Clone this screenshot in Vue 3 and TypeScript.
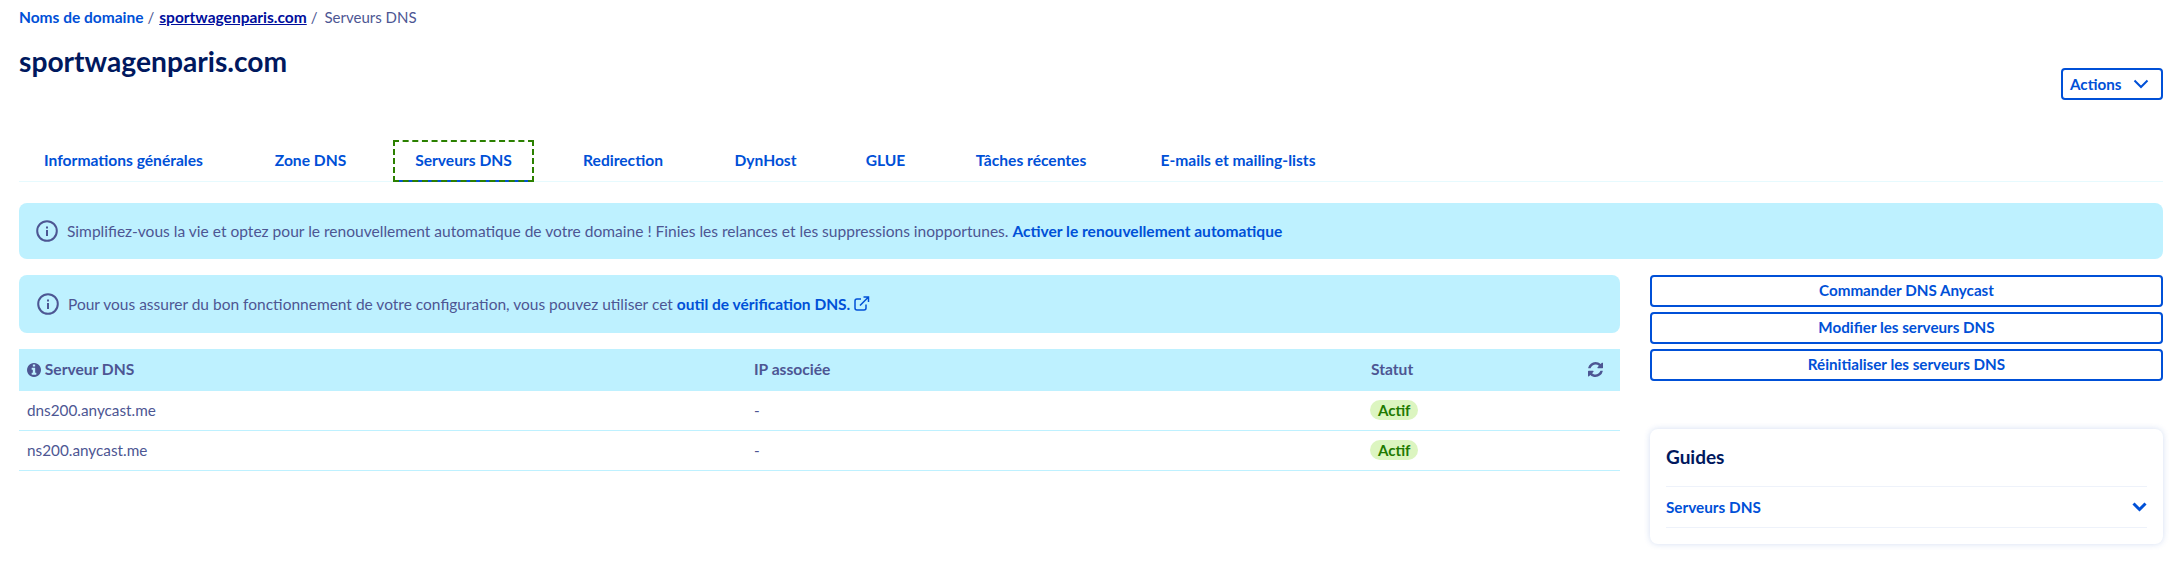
<script setup lang="ts">
const tabs: string[] = ['Informations générales', 'Zone DNS', 'Serveurs DNS', 'Redirection', 'DynHost', 'GLUE', 'Tâches récentes', 'E-mails et mailing-lists']
const rows = [{ name: 'dns200.anycast.me' }, { name: 'ns200.anycast.me' }]
const actions: string[] = ['Commander DNS Anycast', 'Modifier les serveurs DNS', 'Réinitialiser les serveurs DNS']
</script>

<template>
  <div class="page">
    <nav class="crumbs">
      <a class="crumb">Noms de domaine</a><span class="sep">/</span>
      <a class="crumb current">sportwagenparis.com</a><span class="sep">/</span>
      <span class="last">Serveurs DNS</span>
    </nav>
    <header class="head">
      <h1>sportwagenparis.com</h1>
      <button class="btn actions">Actions
        <svg width="16" height="10" viewBox="0 0 16 10" fill="none" stroke="#0050d7" stroke-width="2"><path d="M1.5 1.5 8 8l6.5-6.5" /></svg>
      </button>
    </header>
    <div class="tabs">
      <a v-for="t in tabs" :key="t" class="tab" :class="{ active: t === 'Serveurs DNS' }">{{ t }}</a>
    </div>
    <div class="alert wide">
      <svg class="info" width="22" height="22" viewBox="0 0 22 22"><circle cx="11" cy="11" r="9.8" fill="none" stroke="#4d5693" stroke-width="2" /><rect x="10" y="10" width="2" height="6" fill="#4d5693" /><rect x="10" y="6.5" width="2" height="2" fill="#4d5693" /></svg>
      <p>Simplifiez-vous la vie et optez pour le renouvellement automatique de votre domaine ! Finies les relances et les suppressions inopportunes. <a>Activer le renouvellement automatique</a></p>
    </div>
    <div class="columns">
      <main class="left">
        <div class="alert">
          <svg class="info" width="22" height="22" viewBox="0 0 22 22"><circle cx="11" cy="11" r="9.8" fill="none" stroke="#4d5693" stroke-width="2" /><rect x="10" y="10" width="2" height="6" fill="#4d5693" /><rect x="10" y="6.5" width="2" height="2" fill="#4d5693" /></svg>
          <p>Pour vous assurer du bon fonctionnement de votre configuration, vous pouvez utiliser cet <a>outil de vérification DNS.
            <svg width="16" height="15" viewBox="0 0 16 15" fill="none" stroke="#0050d7" stroke-width="1.5"><path d="M12 8.5V12a2 2 0 0 1-2 2H3a2 2 0 0 1-2-2V5a2 2 0 0 1 2-2h4" /><path d="M6 9.5 14 1.5M9.5 1h5v5" /></svg>
          </a></p>
        </div>
        <table>
          <thead>
            <tr>
              <th class="c1">
                <svg width="14" height="14" viewBox="128 128 1536 1536"><path fill="#4d5693" d="M1152 1376v-160q0-14-9-23t-23-9h-96v-512q0-14-9-23t-23-9h-320q-14 0-23 9t-9 23v160q0 14 9 23t23 9h96v320h-96q-14 0-23 9t-9 23v160q0 14 9 23t23 9h448q14 0 23-9t9-23zm-128-896v-160q0-14-9-23t-23-9h-192q-14 0-23 9t-9 23v160q0 14 9 23t23 9h192q14 0 23-9t9-23zm640 416q0 209-103 385.5t-279.5 279.5-385.5 103-385.5-103-279.5-279.5-103-385.5 103-385.5 279.5-279.5 385.5-103 385.5 103 279.5 279.5 103 385.5z" /></svg>
                Serveur DNS
              </th>
              <th class="c2">IP associée</th>
              <th class="c3">Statut</th>
              <th class="c4">
                <svg width="15" height="15" viewBox="128 128 1536 1536"><path fill="#4d5693" d="M1639 1056q0 5-1 7-64 268-268 434.5t-478 166.5q-146 0-282.5-55t-243.5-157l-129 129q-19 19-45 19t-45-19-19-45v-448q0-26 19-45t45-19h448q26 0 45 19t19 45-19 45l-137 137q71 66 161 102t187 36q134 0 250-65t186-179q11-17 53-117 8-23 30-23h192q13 0 22.5 9.5t9.5 22.5zm25-800v448q0 26-19 45t-45 19h-448q-26 0-45-19t-19-45 19-45l138-138q-148-137-349-137-134 0-250 65t-186 179q-11 17-53 117-8 23-30 23h-199q-13 0-22.5-9.5t-9.5-22.5v-7q65-268 270-434.5t480-166.5q146 0 284 55.5t245 156.5l130-129q19-19 45-19t45 19 19 45z" /></svg>
              </th>
            </tr>
          </thead>
          <tbody>
            <tr v-for="r in rows" :key="r.name">
              <td>{{ r.name }}</td>
              <td>-</td>
              <td><span class="badge">Actif</span></td>
              <td></td>
            </tr>
          </tbody>
        </table>
      </main>
      <aside class="right">
        <div class="stack">
          <button v-for="a in actions" :key="a" class="btn full">{{ a }}</button>
        </div>
        <section class="card">
          <h2>Guides</h2>
          <div class="guide">
            <a>Serveurs DNS</a>
            <svg width="15" height="10" viewBox="0 0 15 10" fill="none" stroke="#0050d7" stroke-width="3"><path d="M1.5 1.5 7.5 7.5l6-6" /></svg>
          </div>
        </section>
      </aside>
    </div>
  </div>
</template>

<style>
html, body { background: #fff; }
</style>

<style scoped>
.page {
  box-sizing: border-box;
  width: 2174px;
  height: 569px;
  padding: 0 11px 0 19px;
  font-family: "Lato", "Open Sans", sans-serif;
  font-size: 16px;
  color: #4d5693;
  overflow: hidden;
}
a { color: #0050d7; font-weight: 600; }
.crumbs { display: flex; align-items: center; height: 33px; font-size: 15.5px; }
.crumb { font-weight: 700; }
.crumb.current { color: #000e9c; text-decoration: underline; }
.last { font-size: 15px; margin-left: 2px; }
.sep { margin: 0 5px 0 4px; font-size: 15px; }
.head { display: flex; justify-content: space-between; align-items: flex-start; height: 107px; }
h1 { margin: 9px 0 0; font-size: 28.2px; line-height: 38px; font-weight: 700; color: #00185e; }
.btn {
  box-sizing: border-box;
  height: 32px;
  background: #fff;
  border: 2px solid #0050d7;
  border-radius: 4px;
  color: #0050d7;
  font: 700 15.2px "Lato", sans-serif;
  padding: 0 0 2px;
}
.actions {
  display: flex;
  align-items: center;
  justify-content: space-between;
  width: 102px;
  margin-top: 35px;
  padding: 0 12px 0 7px;
}
.tabs {
  display: grid;
  grid-template-columns: 209px 115px 141px 128px 107px 83px 158px 206px;
  justify-content: start;
  column-gap: 25px;
  box-sizing: border-box;
  height: 42px;
  border-bottom: 1px solid #e6fafe;
}
.tab {
  box-sizing: border-box;
  display: flex;
  align-items: center;
  justify-content: center;
  height: 42px;
  padding-bottom: 2px;
  font-size: 15.6px;
  font-weight: 700;
  white-space: nowrap;
}
.tab.active {
  border: 2px dashed #2b8000;
  background: linear-gradient(#0050d7, #0050d7) bottom / 100% 2px no-repeat;
  background-origin: border-box;
}
.alert {
  display: flex;
  align-items: center;
  box-sizing: border-box;
  height: 58px;
  padding: 0 18px;
  background: #bef1ff;
  border-radius: 8px;
}
.alert.wide { height: 56px; margin-top: 21px; padding: 0 17px; }
.alert p { margin: 0 0 0 9px; font-size: 15.5px; }
.alert.wide p { font-size: 15.55px; }
.alert a { font-weight: 700; }
.alert a svg { vertical-align: -1px; }
.info { flex: none; }
.columns { display: flex; gap: 30px; margin-top: 16px; }
.left { width: 1601px; flex: none; }
.right { flex: 1; }
table { width: 100%; border-collapse: separate; border-spacing: 0; margin-top: 16px; table-layout: fixed; }
th { height: 42px; box-sizing: border-box; background: #bef1ff; text-align: left; padding: 0 8px 2px; font-weight: 700; font-size: 15.6px; }
th svg { vertical-align: -2px; }
.c1 { width: 727px; }
.c2 { width: 617px; }
.c4 { text-align: right; padding-right: 17px; }
td { height: 40px; box-sizing: border-box; padding: 0 8px 2px; border-bottom: 1px solid #bef1ff; font-size: 15.3px; }
.badge {
  display: inline-block;
  height: 20px;
  line-height: 20px;
  padding: 0 8px;
  border-radius: 10px;
  background: #dcf5c0;
  color: #1f7a00;
  font-size: 15px;
  font-weight: 700;
  margin-left: -1px;
}
.stack { display: flex; flex-direction: column; gap: 5px; }
.full { width: 100%; }
.card {
  box-sizing: border-box;
  height: 115px;
  margin-top: 48px;
  padding: 0 16px;
  background: #fff;
  border-radius: 8px;
  box-shadow: 0 0 6px rgba(40, 89, 192, .2);
}
h2 { margin: 0; height: 57px; line-height: 56px; font-size: 19px; font-weight: 700; color: #00185e; border-bottom: 1px solid #eef2fa; }
.guide {
  display: flex;
  align-items: center;
  justify-content: space-between;
  height: 41px;
  padding-bottom: 1px;
  box-sizing: border-box;
  font-size: 15.3px;
  border-bottom: 1px solid #eef2fa;
}
.guide a { font-weight: 700; }
</style>
